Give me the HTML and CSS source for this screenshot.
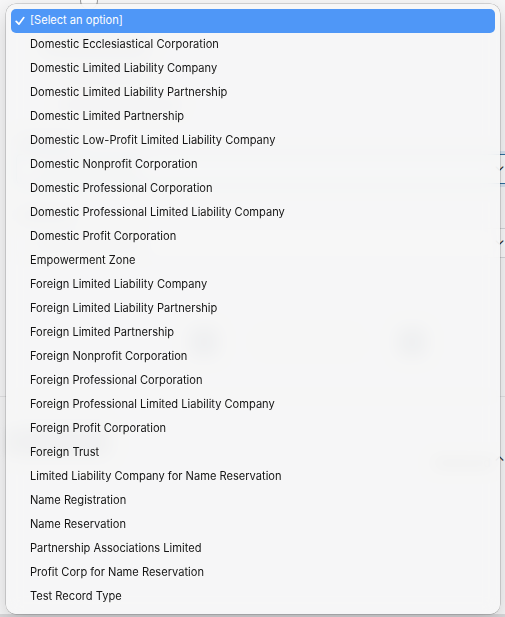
FILE: index.html
```html
<!DOCTYPE html>
<html lang="en">
<head>
<meta charset="utf-8">
<title>Record Type</title>
<link rel="stylesheet" href="styles.css">
</head>
<body>
<div class="form">
  <div class="form-top"><span class="radio"></span></div>
  <div class="section">
    <div class="ghost ghost-title"></div>
    <div class="ghost ghost-line"></div>
    <div class="ghost ghost-line short"></div>
  </div>
  <div class="field">
    <div class="ghost ghost-label"></div>
    <div class="input focused"><span class="ghost ghost-value"></span><span class="chev">&#x2304;</span></div>
  </div>
  <div class="field">
    <div class="ghost ghost-label"></div>
    <div class="input"><span class="ghost ghost-value"></span><span class="chev">&#x2304;</span></div>
  </div>
  <div class="row-tools">
    <span class="sq"></span><span class="ghost ghost-input"></span><span class="sq"></span>
  </div>
  <div class="footer">
    <span class="ghost ghost-btn"></span>
    <span class="adv">Advanced <span class="up">&#x2303;</span></span>
  </div>
</div>

<div class="menu" role="listbox">
  <div class="opt selected" role="option"><svg class="check" viewBox="0 0 10 10" width="10" height="10"><path d="M1.2 5.4 L3.9 8.2 L8.8 1.6" fill="none" stroke="#fff" stroke-width="1.7" stroke-linecap="round" stroke-linejoin="round"/></svg>[Select an option]</div>
  <div class="opt">Domestic Ecclesiastical Corporation</div>
  <div class="opt">Domestic Limited Liability Company</div>
  <div class="opt">Domestic Limited Liability Partnership</div>
  <div class="opt">Domestic Limited Partnership</div>
  <div class="opt">Domestic Low-Profit Limited Liability Company</div>
  <div class="opt">Domestic Nonprofit Corporation</div>
  <div class="opt">Domestic Professional Corporation</div>
  <div class="opt">Domestic Professional Limited Liability Company</div>
  <div class="opt">Domestic Profit Corporation</div>
  <div class="opt">Empowerment Zone</div>
  <div class="opt">Foreign Limited Liability Company</div>
  <div class="opt">Foreign Limited Liability Partnership</div>
  <div class="opt">Foreign Limited Partnership</div>
  <div class="opt">Foreign Nonprofit Corporation</div>
  <div class="opt">Foreign Professional Corporation</div>
  <div class="opt">Foreign Professional Limited Liability Company</div>
  <div class="opt">Foreign Profit Corporation</div>
  <div class="opt">Foreign Trust</div>
  <div class="opt">Limited Liability Company for Name Reservation</div>
  <div class="opt">Name Registration</div>
  <div class="opt">Name Reservation</div>
  <div class="opt">Partnership Associations Limited</div>
  <div class="opt">Profit Corp for Name Reservation</div>
  <div class="opt">Test Record Type</div>
</div>
</body>
</html>
```

FILE: styles.css
```css
html, body {
  margin: 0;
  padding: 0;
}

body {
  width: 505px;
  height: 617px;
  overflow: hidden;
  position: relative;
  background: #ffffff;
  font-family: Inter, "Liberation Sans", sans-serif;
}

/* form underneath the open dropdown */
.form {
  height: 614px;
  background: #f7f7f8;
  border-bottom: 3px solid #d9d9db;
  box-sizing: content-box;
  display: flex;
  flex-direction: column;
}

.form-top {
  height: 12px;
  padding-left: 80px;
}

.radio {
  display: block;
  width: 16px;
  height: 16px;
  margin-top: -8px;
  border-radius: 50%;
  border: 1px solid #9a9a9a;
  background: #fff;
}

.ghost {
  display: block;
  background: #c9ccd2;
  border-radius: 4px;
  filter: blur(4px);
}

.section {
  padding: 30px 0 0 40px;
  display: flex;
  flex-direction: column;
  gap: 18px;
}

.ghost-title { width: 110px; height: 12px; }
.ghost-line { width: 90px; height: 10px; margin-left: 20px; }
.ghost-line.short { width: 120px; }

.field {
  padding: 26px 0 0 16px;
  display: flex;
  flex-direction: column;
  gap: 8px;
}

.ghost-label { width: 60px; height: 10px; }

.input {
  height: 28px;
  border: 1px solid #d4d6da;
  border-right: none;
  border-radius: 5px 0 0 5px;
  background: #fbfbfc;
  display: flex;
  align-items: center;
  justify-content: space-between;
  padding-left: 16px;
}

.ghost-value { width: 110px; height: 9px; background: #d2d5da; }

.input.focused {
  border-color: #2f6f9f;
  box-shadow: 0 0 0 3px rgba(120, 170, 220, 0.25);
}

.chev {
  font-size: 14px;
  color: #222;
  line-height: 1;
  margin-top: -6px;
}

.row-tools {
  padding: 70px 0 0 190px;
  display: flex;
  align-items: center;
  gap: 40px;
}

.sq {
  width: 28px;
  height: 28px;
  border-radius: 4px;
  background: #b7bcc6;
  filter: blur(3px);
}

.ghost-input {
  width: 100px;
  height: 20px;
  background: #eef0f2;
}

.footer {
  margin-top: 40px;
  padding: 16px 0 0 10px;
  border-top: 1px solid #e3e3e5;
  display: flex;
  align-items: center;
  justify-content: space-between;
}

.ghost-btn { width: 100px; height: 28px; background: #c2c5cb; }

.adv {
  font-size: 12px;
  color: #333;
  margin-top: 40px;
}

.adv .up { font-size: 14px; }

/* the open popup list */
.menu {
  position: absolute;
  left: 6px;
  top: 4px;
  width: 494px;
  height: 610px;
  box-sizing: border-box;
  padding: 5px;
  border-radius: 10px;
  background: rgba(246, 246, 246, 0.88);
  backdrop-filter: blur(8px);
  box-shadow: 0 0 0 0.5px rgba(0, 0, 0, 0.28), 0 8px 22px rgba(0, 0, 0, 0.18);
  display: flex;
  flex-direction: column;
}

.opt {
  height: 24px;
  flex: none;
  box-sizing: border-box;
  display: flex;
  align-items: center;
  padding: 0 0 2px 19px;
  font-size: 11.1px;
  color: #141414;
  border-radius: 5px;
  white-space: nowrap;
  position: relative;
}

.opt.selected {
  background: #4f97f7;
  color: #ffffff;
}

.check {
  position: absolute;
  left: 4px;
  top: 7px;
}
```
